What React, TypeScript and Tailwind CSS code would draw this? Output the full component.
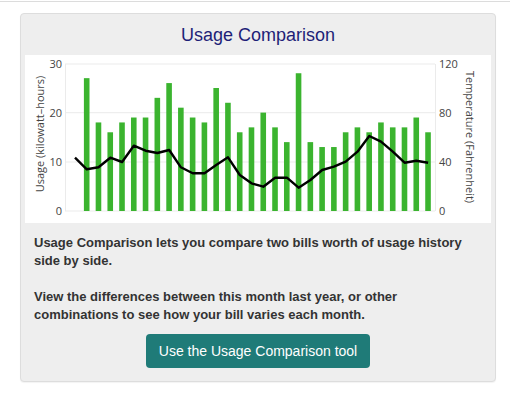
import React from "react";

const usage = [27, 18, 16, 18, 19, 19, 23, 26, 21, 19, 18, 25, 22, 16, 17, 20, 17, 14, 28, 14, 13, 13, 16, 17, 16, 18, 17, 17, 19, 16];
const tempY = [157.7, 169.3, 167.3, 157.7, 162, 145.7, 150.7, 153, 150, 167.3, 173.3, 173.3, 165, 157.3, 175, 183.3, 186.7, 177.7, 177.7, 187.7, 180, 170, 166.7, 161.7, 151.7, 136, 141.7, 151.7, 162.7, 160.7, 162.7];

const X0 = 25;
const Y0 = 55;
const STEP = 11.77;
const ZERO = 211 - Y0;
const PX = 4.92;

function Chart() {
  const grid = [64, 112.7, 162, 211].map((y) => y - Y0);
  const leftLabels = ["30", "20", "10", "0"];
  const rightLabels = ["120", "80", "40", "0"];
  const line = tempY.map((y, i) => `${(75 + i * STEP - X0).toFixed(1)},${(y - Y0).toFixed(1)}`).join(" ");
  return (
    <svg width="466" height="168" viewBox="0 0 466 168" className="block">
      <rect width="466" height="168" fill="#ffffff" />
      {grid.map((y) => (
        <line key={y} x1="40" x2="410" y1={y} y2={y} stroke="#ebebeb" strokeWidth="1" />
      ))}
      <line x1="40.5" x2="40.5" y1={grid[0]} y2={grid[3]} stroke="#ebebeb" />
      <line x1="410.5" x2="410.5" y1={grid[0]} y2={grid[3]} stroke="#ebebeb" />
      {usage.map((v, i) => {
        const cx = 86.7 + i * STEP - X0;
        const h = v * PX;
        return <rect key={i} x={cx - 2.8} y={ZERO - h} width="5.6" height={h} fill="#3bb42f" />;
      })}
      <polyline points={line} fill="none" stroke="#000000" strokeWidth="2.4" strokeLinejoin="round" />
      <g fontFamily="'Open Sans', Verdana, Arial, sans-serif" fontSize="11" fill="#444444">
        {grid.map((y, i) => (
          <text key={`l${i}`} x="37" y={y + 4} textAnchor="end">{leftLabels[i]}</text>
        ))}
        {grid.map((y, i) => (
          <text key={`r${i}`} x="414" y={y + 4}>{rightLabels[i]}</text>
        ))}
        <text x="0" y="0" textAnchor="middle" transform="translate(19 79) rotate(-90)">Usage (kilowatt–hours)</text>
        <text x="0" y="0" textAnchor="middle" transform="translate(441 82) rotate(90)">Temperature (Fahrenheit)</text>
      </g>
    </svg>
  );
}

export default function App() {
  return (
    <div className="w-[510px] h-[399px] bg-white font-['Liberation_Sans',Arial,sans-serif]">
      <div className="h-px mt-px bg-[#dcdcdc]" />
      <div className="ml-[20px] mt-[11px] w-[476px] rounded-[4px] border border-[#dddddd] bg-[#eeeeee] px-[4px] pb-[13px] shadow-[0_1px_1px_rgba(0,0,0,0.05)]">
        <div className="h-[41px] flex items-center justify-center text-[18px] text-[#1e1e78] pt-[1px]">
          Usage Comparison
        </div>
        <Chart />
        <div className="px-[9px] pt-[11px] text-[13px] leading-[18px] font-bold text-[#333333]">
          <p>Usage Comparison lets you compare two bills worth of usage history side by side.</p>
          <p className="mt-[18px]">View the differences between this month last year, or other combinations to see how your bill varies each month.</p>
        </div>
        <div className="mt-[10px] flex justify-center">
          <button className="h-[34px] px-[13px] rounded-[4px] bg-[#1f7b78] text-white text-[14px] leading-[20px]">
            Use the Usage Comparison tool
          </button>
        </div>
      </div>
    </div>
  );
}
